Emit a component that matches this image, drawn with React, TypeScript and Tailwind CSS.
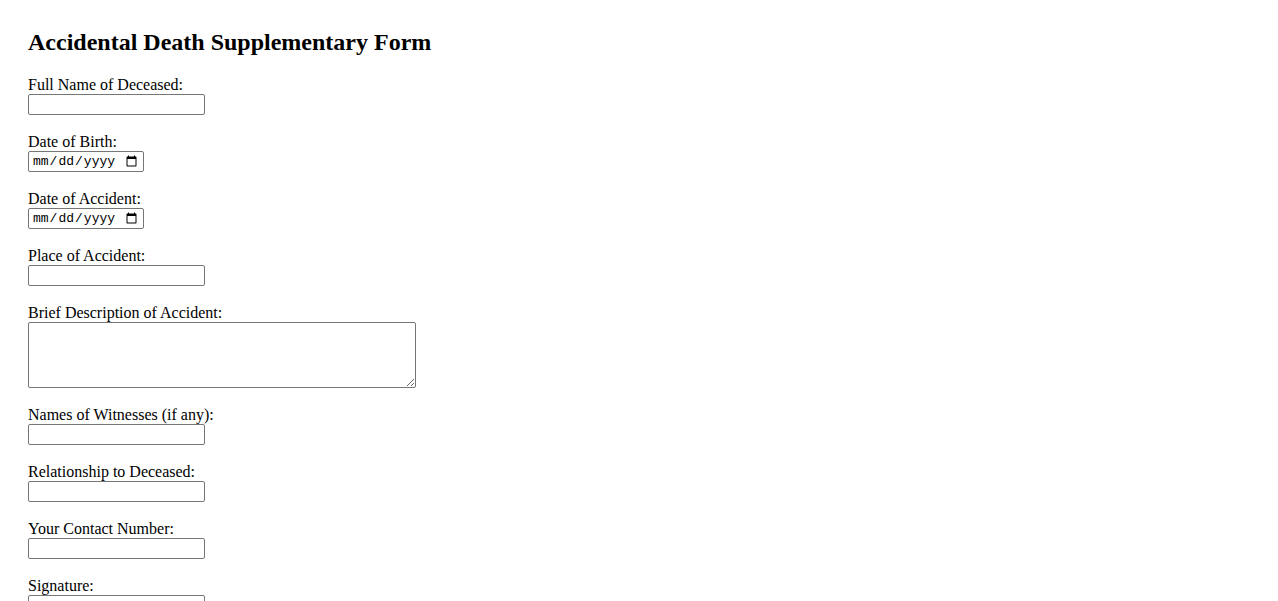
const fields: { label: string; type: "text" | "date" | "textarea" }[] = [
  { label: "Full Name of Deceased:", type: "text" },
  { label: "Date of Birth:", type: "date" },
  { label: "Date of Accident:", type: "date" },
  { label: "Place of Accident:", type: "text" },
  { label: "Brief Description of Accident:", type: "textarea" },
  { label: "Names of Witnesses (if any):", type: "text" },
  { label: "Relationship to Deceased:", type: "text" },
  { label: "Your Contact Number:", type: "text" },
  { label: "Signature:", type: "text" },
];

function Field({ label, type }: { label: string; type: string }) {
  return (
    <div className="mb-[18px] flex flex-col items-start">
      <label className="block h-[18px] text-[16px] leading-[18px]">{label}</label>
      {type === "textarea" ? (
        <textarea className="block h-[66px] w-[388px] resize rounded-[2px] border border-[#767676] bg-white px-[2px] py-[2px] font-['Liberation_Mono',monospace] text-[13px]" />
      ) : type === "date" ? (
        <input
          type="date"
          className="block h-[21px] w-[116px] rounded-[2px] border border-[#767676] bg-white px-[3px] font-['Liberation_Mono',monospace] text-[13px] leading-[17px]"
        />
      ) : (
        <input
          type="text"
          className="block h-[21px] w-[177px] rounded-[2px] border border-[#767676] bg-white px-[2px] font-['Liberation_Sans',sans-serif] text-[13px]"
        />
      )}
    </div>
  );
}

export default function App() {
  return (
    <div className="min-h-screen bg-white px-[28px] pt-[27.6px] font-['Liberation_Serif',serif] text-black">
      <h2 className="mb-[20px] text-[24px] font-bold leading-[28px]">
        Accidental Death Supplementary Form
      </h2>
      <form>
        {fields.map((f) => (
          <Field key={f.label} label={f.label} type={f.type} />
        ))}
      </form>
    </div>
  );
}
